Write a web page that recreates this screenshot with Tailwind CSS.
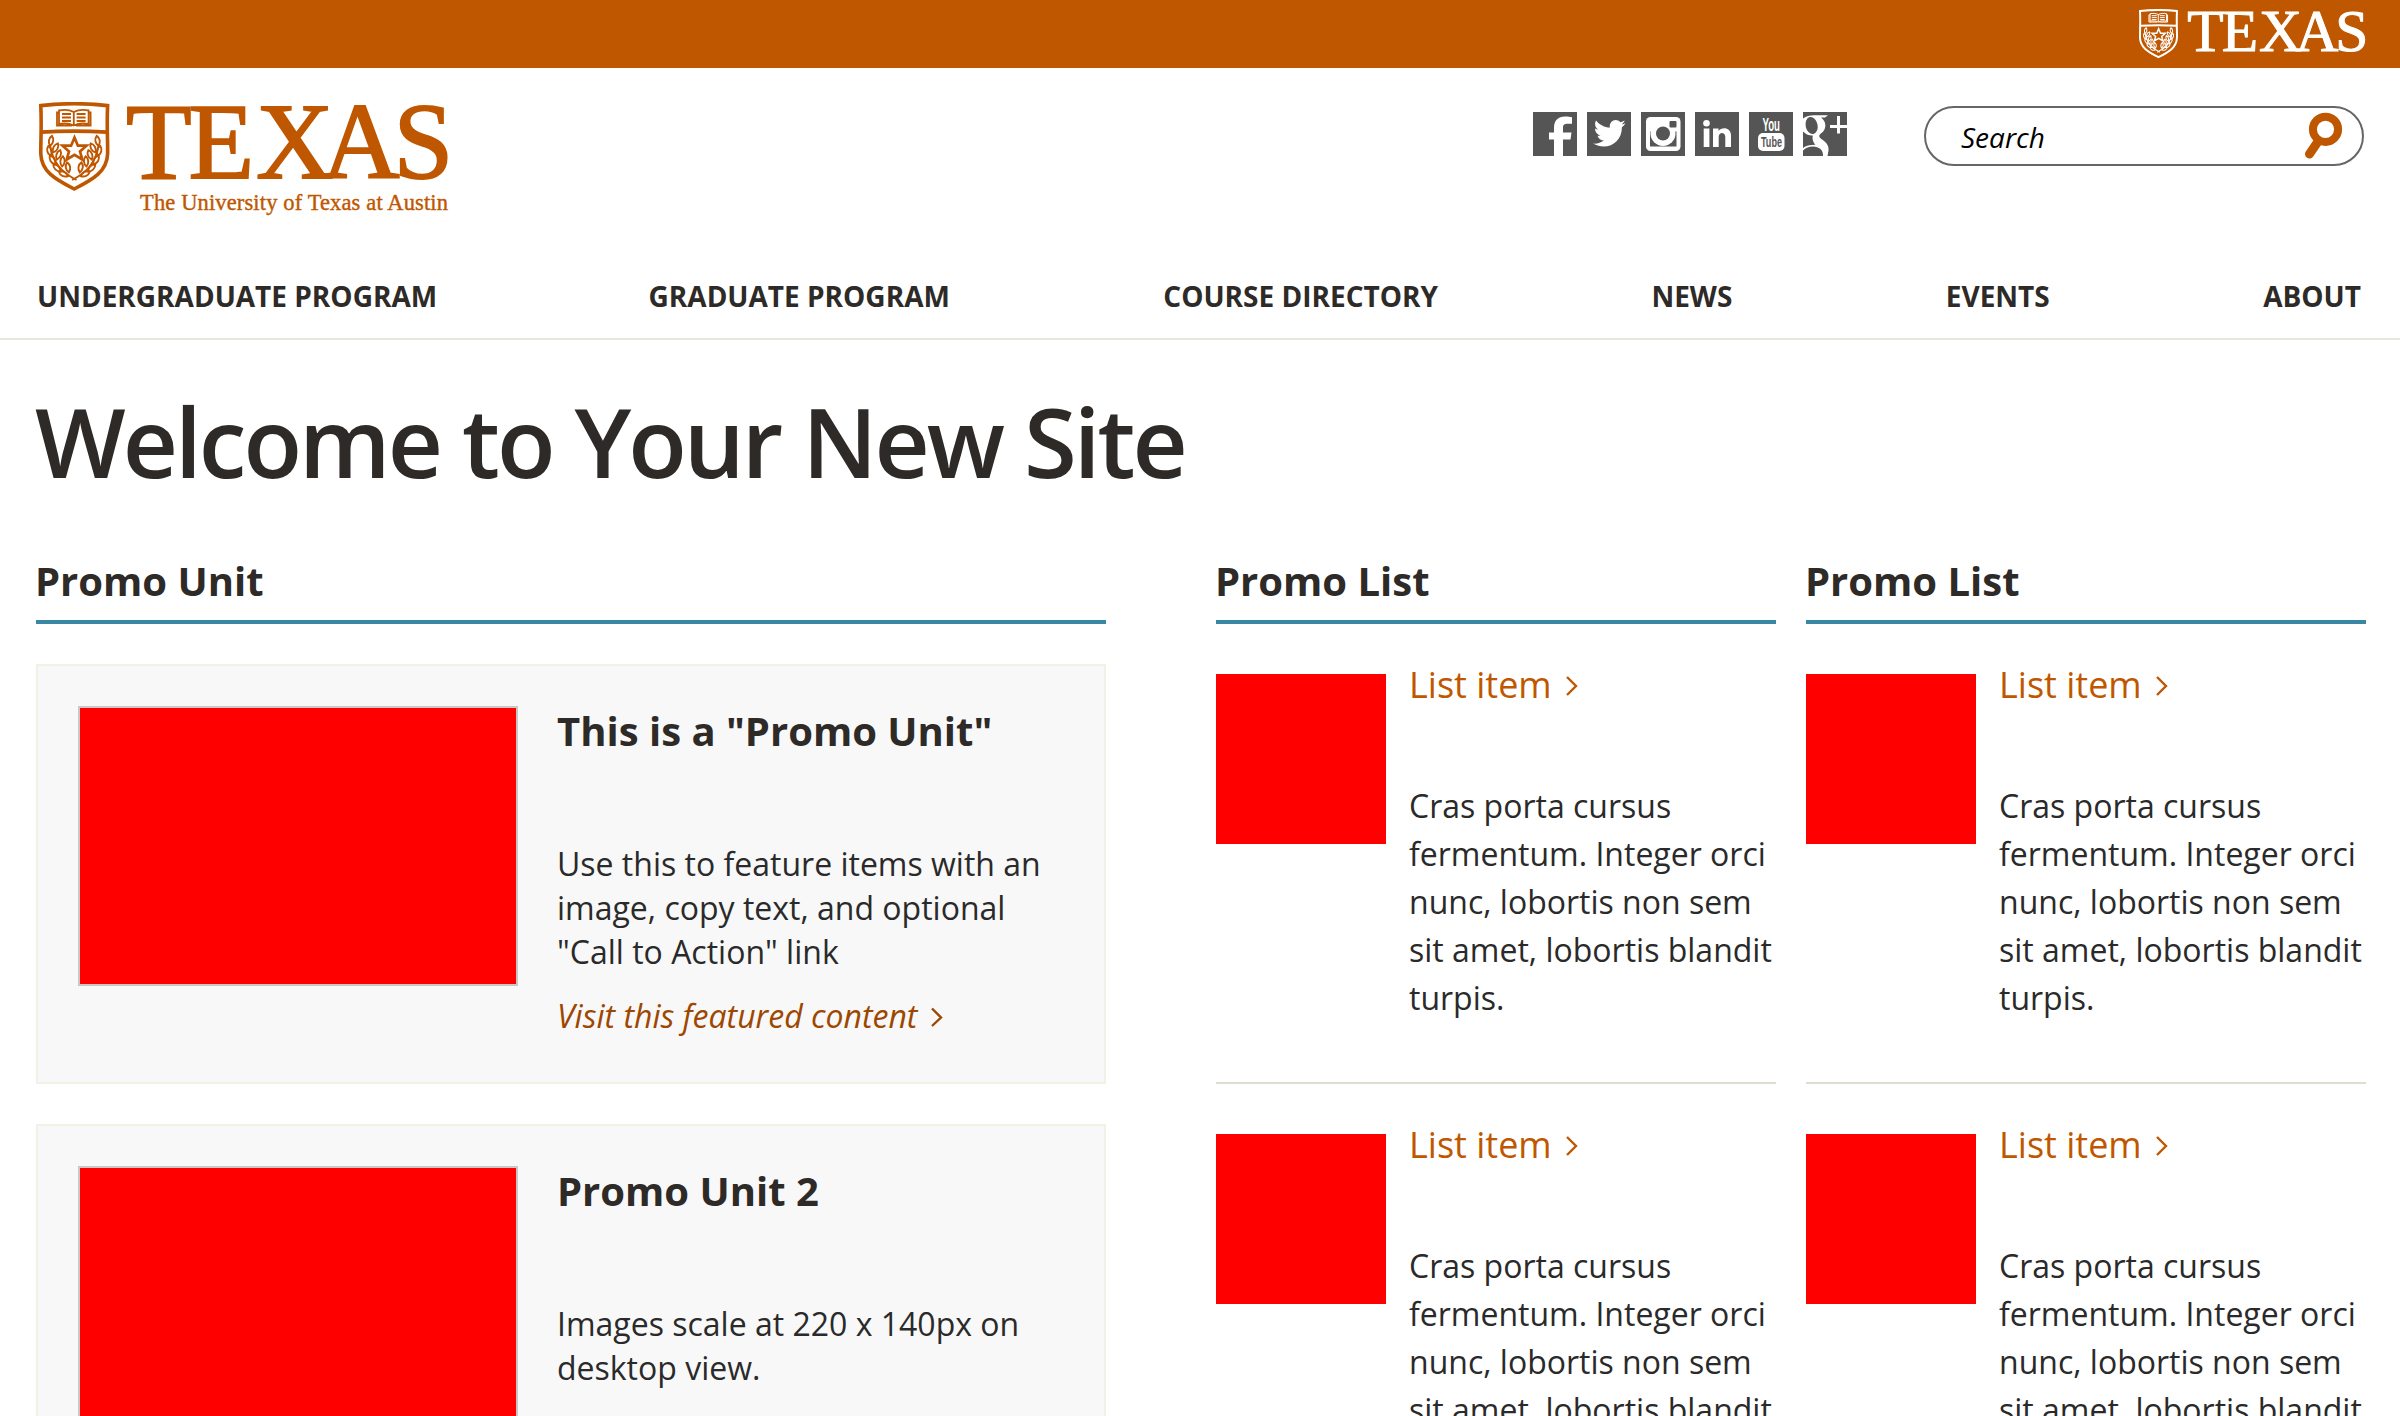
<!DOCTYPE html>
<html lang="en">
<head>
<meta charset="utf-8">
<title>The University of Texas at Austin</title>
<script src="https://cdn.jsdelivr.net/npm/@tailwindcss/browser@4"></script>
</head>
<body class="h-[1416px] w-[2400px] overflow-hidden bg-white font-['Open_Sans',sans-serif] text-[#2e2a27]">
<svg class="hidden">
  <defs>
    <g id="branch" fill="none" stroke="currentColor" stroke-width="1.9">
      <path d="M11 44C14 60 22 70 37.500 78"/>
      <path id="l" d="M0-5.200C2.900-2.500 2.900 2 0 5C-2.900 2-2.900-2.500 0-5.200Z" transform="translate(12 39) rotate(10)"/>
      <use href="#l" transform="translate(-1.500 10) rotate(-22 12 39)"/>
      <use href="#l" transform="translate(4.500 7) rotate(18 12 39)"/>
      <use href="#l" transform="translate(1.500 19) rotate(-40 12 39)"/>
      <use href="#l" transform="translate(7.500 14) rotate(10 12 39)"/>
      <use href="#l" transform="translate(6 27) rotate(-55 12 39)"/>
      <use href="#l" transform="translate(11.500 20.500) rotate(-5 12 39)"/>
      <use href="#l" transform="translate(12.500 33) rotate(-75 12 39)"/>
      <use href="#l" transform="translate(17 26.500) rotate(-20 12 39)"/>
    </g>
    <symbol id="wordmark" viewBox="0 0 412 92">
      <path d="M1.800 3.600Q35.200-.2 68.600 3.600C67.600 26 68.900 38 68.600 52C68 69 55 77 35.200 87C15.500 77 2.400 69 1.800 52C1.600 38 2.800 26 1.800 3.600Z" fill="none" stroke="currentColor" stroke-width="3.600"/>
      <path d="M2 28.200Q35 26.500 68 28.200V32Q35 30.200 2 32Z" fill="currentColor"/>
      <path d="M34.800 10C30 7.500 25 7.500 20 8.500V22C25 21 30 21 34.800 23.500C39.600 21 44.600 21 49.600 22V8.500C44.600 7.500 39.600 7.500 34.800 10ZM34.800 10V23M20 10.500H18V23.500H33M49.600 10.500H51.600V23.500H37M23 12H32M23 15.500H32M23 19H32M37.600 12H46.600M37.600 15.500H46.600M37.600 19H46.600" fill="none" stroke="currentColor" stroke-width="1.800"/>
      <path d="M35.500 35.500L38.900 43.700H47.500L41 49.400L43.300 57.500L35.500 52.800L27.700 57.500L30 49.400L23.500 43.700H32.100Z" fill="none" stroke="currentColor" stroke-width="2.700"/>
      <use href="#branch"/>
      <use href="#branch" transform="translate(70.600) scale(-1 1)"/>
      <text x="87 149.500 217 283 354.500" y="76" font-family="Liberation Serif,serif" font-size="107.500" fill="currentColor" stroke="currentColor" stroke-width="1.800">TEXAS</text>
    </symbol>
  </defs>
</svg>

<div class="flex h-[68px] justify-end bg-[#bf5700] pt-[9px] pr-[33px] text-white">
  <svg class="h-[51px] w-[228px]"><use href="#wordmark" width="228" height="51"/></svg>
</div>

<header class="flex h-[176px] justify-between pr-[36px] pl-[39px]">
  <div class="pt-[34px] text-[#bf5700]">
    <svg class="block h-[120px] w-[412px]">
      <use href="#wordmark" width="412" height="92"/>
      <text x="101" y="108" textLength="308" font-family="Liberation Serif,serif" font-size="22.500" fill="currentColor" stroke="currentColor" stroke-width=".4">The University of Texas at Austin</text>
    </svg>
  </div>
  <div class="flex">
    <div class="mt-[44px] mr-[77px] flex gap-[10px]">
      <svg class="size-[44px] bg-[#555]" viewBox="0 0 44 44" fill="#fff"><path d="M21 44V27.500H16V20.500H21V16C21 8.500 25 4.500 32 4.500C35 4.500 37 4.700 39 5.200V11.700H35C31 11.700 30 13 30 16V20.500H38.500L37.500 27.500H30V44Z"/></svg>
      <svg class="size-[44px] bg-[#555]" viewBox="0 0 44 44" fill="#fff"><path d="M38.500 11.200C37.500 11.700 36 12.200 34.800 12.300C36.100 11.400 37.200 10.200 37.600 8.600C36.400 9.400 35 9.900 33.400 10.200C29.500 5.500 21.700 8.600 22.900 15.500C17.400 15.300 12.500 12.700 9 8.400C7.200 11.600 8.200 15.400 11.200 17.500C10.100 17.500 9 17.100 8 16.600C8 20 10.300 22.900 13.600 23.600C12.600 23.900 11.500 23.900 10.500 23.700C11.400 26.600 14 28.400 16.900 28.500C13.800 30.900 10 32 6 31.600C20 39.600 35 30.700 34.900 15.200C36.400 14.100 37.500 12.800 38.500 11.200Z"/></svg>
      <svg class="size-[44px] bg-[#555]" viewBox="0 0 44 44"><rect x="5" y="5" width="34.500" height="34" rx="4.500" fill="#fff"/><path d="M9 19.500H35.500V34.500H9Z" fill="#555"/><circle cx="22" cy="21.500" r="12.500" fill="#fff"/><circle cx="22" cy="21.500" r="7" fill="#555"/><rect x="28.500" y="9" width="7" height="6.500" rx="1" fill="#555"/></svg>
      <svg class="size-[44px] bg-[#555]" viewBox="0 0 44 44" fill="#fff"><circle cx="11.500" cy="11.200" r="3.300"/><path d="M8.700 16.500H14.400V35H8.700ZM18 16.500H23.500V19C26.500 14.500 36 15 36 23.500V35H30.300V25C30.300 19.500 23.700 19.500 23.700 25V35H18Z"/></svg>
      <svg class="size-[44px] overflow-visible bg-[#555]" viewBox="0 0 44 44"><text x="13.500" y="19.300" textLength="17.500" lengthAdjust="spacingAndGlyphs" font-family="Liberation Sans,sans-serif" font-weight="bold" font-size="18.500" fill="#fff">You</text><rect x="9" y="21" width="26.500" height="18" rx="5" fill="#fff"/><text x="12" y="35" textLength="21" lengthAdjust="spacingAndGlyphs" font-family="Liberation Sans,sans-serif" font-weight="bold" font-size="15" fill="#555">Tube</text></svg>
      <svg class="size-[44px] bg-[#555]" viewBox="0 0 44 44"><path d="M0 6.500C3 4 7 3.200 11 3.200H25L22 5.500H18C24.500 10.500 23 18 18.500 21C15.500 23.200 15.500 25 19 27.500C24 31 26 34 25.500 38.500L24.500 44H20C20.500 38 16 34.500 10 34.500C6 34.500 2.500 36 0 38.500V36C2.500 34 7 32.800 12.500 32.800C10.500 30.500 9 28 9.800 23.500C6 23.800 2.500 22 0 19.500Z" fill="#fff"/><ellipse cx="8.600" cy="13.500" rx="6" ry="8.600" transform="rotate(-12 8.600 13.500)" fill="#555"/><path d="M27 14.500H44M35.500 4V21.500" stroke="#fff" stroke-width="3"/></svg>
    </div>
    <div class="mt-[38px] flex h-[60px] w-[440px] items-center justify-between rounded-full border-2 border-[#666] pr-[18px] pl-[35px]">
      <span class="pt-[2px] text-[28px] leading-[54px] text-black italic">Search</span>
      <svg class="h-[48px] w-[40px]" viewBox="0 0 40 48"><circle cx="21.500" cy="17.300" r="12.600" fill="none" stroke="#bf5700" stroke-width="8"/><path d="M14 29.500L5.500 42" stroke="#bf5700" stroke-width="9" stroke-linecap="round"/></svg>
    </div>
  </div>
</header>

<nav class="flex h-[96px] justify-between border-b-2 border-[#e9e5e1] pr-[39px] pl-[37px] text-[28px] leading-[104px] font-bold whitespace-nowrap">
  <a>UNDERGRADUATE PROGRAM</a><a class="-ml-[2px]">GRADUATE PROGRAM</a><a>COURSE DIRECTORY</a><a>NEWS</a><a>EVENTS</a><a>ABOUT</a>
</nav>

<main class="pl-[36px]">
  <h1 class="-ml-px h-[209px] pt-[36px] text-[96px] leading-[130px] font-semibold tracking-[-3px]">Welcome to Your New Site</h1>
  <div class="flex items-start">
    <section class="mr-[110px] w-[1070px]">
      <h2 class="h-[75px] border-b-4 border-[#3a87a5] text-[40px] leading-[64px] font-bold -indent-px">Promo Unit</h2>
      <div class="mt-[40px] flex h-[420px] border-2 border-[#f3f0e6] bg-[#f8f8f8] pt-[40px] pl-[40px]">
        <div class="h-[280px] w-[440px] shrink-0 border-2 border-[#c8c8c8] bg-[#f00]"></div>
        <div class="ml-[39px] whitespace-nowrap">
          <h3 class="mb-[86px] text-[40px] leading-[50px] font-bold">This is a "Promo Unit"</h3>
          <p class="text-[32px] leading-[44px] text-[#2a2a2a]">Use this to feature items with an<br>image, copy text, and optional<br>"Call to Action" link</p>
          <a class="mt-[20px] flex items-center text-[32px] leading-[44px] text-[#9d4700] italic">Visit this featured content<svg class="mt-[2px] ml-[13px] h-[20px] w-[14px]" viewBox="0 0 14 20"><path d="M2 1.500L11 10.500L2 19" fill="none" stroke="#9d4700" stroke-width="2.400"/></svg></a>
        </div>
      </div>
      <div class="mt-[40px] flex h-[420px] border-2 border-[#f3f0e6] bg-[#f8f8f8] pt-[40px] pl-[40px]">
        <div class="h-[280px] w-[440px] shrink-0 border-2 border-[#c8c8c8] bg-[#f00]"></div>
        <div class="ml-[39px] whitespace-nowrap">
          <h3 class="mb-[86px] text-[40px] leading-[50px] font-bold">Promo Unit 2</h3>
          <p class="text-[32px] leading-[44px] text-[#2a2a2a]">Images scale at 220 x 140px on<br>desktop view.</p>
        </div>
      </div>
    </section>
    <div id="lists" class="flex gap-[30px]"></div>
  </div>
</main>
<script>
const item = `
  <li class="flex h-[460px] border-b-2 border-[#dfdcd0] pt-[50px]">
    <div class="size-[170px] shrink-0 bg-[#f00]"></div>
    <div class="-mt-[13px] ml-[23px] whitespace-nowrap">
      <a class="flex items-center text-[36px] leading-[48px] text-[#bf5700]">List item<svg class="mt-[2px] ml-[13px] h-[20px] w-[14px]" viewBox="0 0 14 20"><path d="M2 1L11 10L2 19" fill="none" stroke="#bf5700" stroke-width="2.400"/></svg></a>
      <p class="mt-[73px] text-[32px] leading-[48px] text-[#2a2a2a]">Cras porta cursus<br>fermentum. Integer orci<br>nunc, lobortis non sem<br>sit amet, lobortis blandit<br>turpis.</p>
    </div>
  </li>`;
const list = `
  <section class="w-[560px]">
    <h2 class="h-[75px] border-b-4 border-[#3a87a5] text-[40px] leading-[64px] font-bold -indent-px">Promo List</h2>
    <ul>${item}${item}</ul>
  </section>`;
document.getElementById('lists').innerHTML = list + list;
</script>
</body>
</html>
